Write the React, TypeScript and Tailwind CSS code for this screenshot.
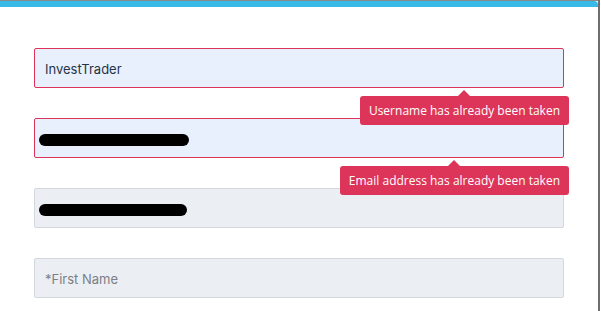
const Tip = ({ text }: { text: string }) => (
  <div className="absolute right-[-5px] top-[48px] z-10">
    <div className="absolute left-1/2 -translate-x-1/2 top-[-6px] w-0 h-0 border-x-[6px] border-b-[6px] border-x-transparent border-b-[#dd3559]"></div>
    <div className="bg-[#dd3559] text-white rounded-[3px] px-[9px] h-[29px] flex items-center text-[12px] font-['Open_Sans',sans-serif] whitespace-nowrap">
      {text}
    </div>
  </div>
);

const Field = ({
  error,
  filled,
  children,
  tip,
}: {
  error?: boolean;
  filled?: boolean;
  children: React.ReactNode;
  tip?: string;
}) => (
  <div className="relative h-10">
    <div
      className={`h-10 rounded-[2px] border flex items-center pl-[10px] pt-[3px] ${
        error ? "border-[#dd3559]" : "border-[#d4d7db]"
      } ${filled ? "bg-[#e8f0fe]" : "bg-[#ebeef3]"}`}
    >
      {children}
    </div>
    {tip && <Tip text={tip} />}
  </div>
);

export default function App() {
  return (
    <div className="w-[601px] h-[311px] flex overflow-hidden bg-white font-['Inter',sans-serif]">
      <div className="w-[598px] flex flex-col border-t border-[#8a8a8a]">
        <div className="h-[6px] bg-[#38b9e6] rounded-tr-[4px]"></div>
        <div className="px-[34px] pt-[41px] flex flex-col gap-[30px]">
          <Field error filled tip="Username has already been taken">
            <span className="text-[13px] text-[#263445]">InvestTrader</span>
          </Field>
          <Field error filled tip="Email address has already been taken">
            <span className="ml-[-6px] block w-[150px] h-3 rounded-full bg-black"></span>
          </Field>
          <Field>
            <span className="ml-[-6px] block w-[148px] h-3 rounded-full bg-black"></span>
          </Field>
          <Field>
            <span className="text-[13px] text-[#7b7f86]">*First Name</span>
          </Field>
        </div>
      </div>
      <div className="w-[2px] bg-[#6e6e6e]"></div>
      <div className="w-px bg-white"></div>
    </div>
  );
}
